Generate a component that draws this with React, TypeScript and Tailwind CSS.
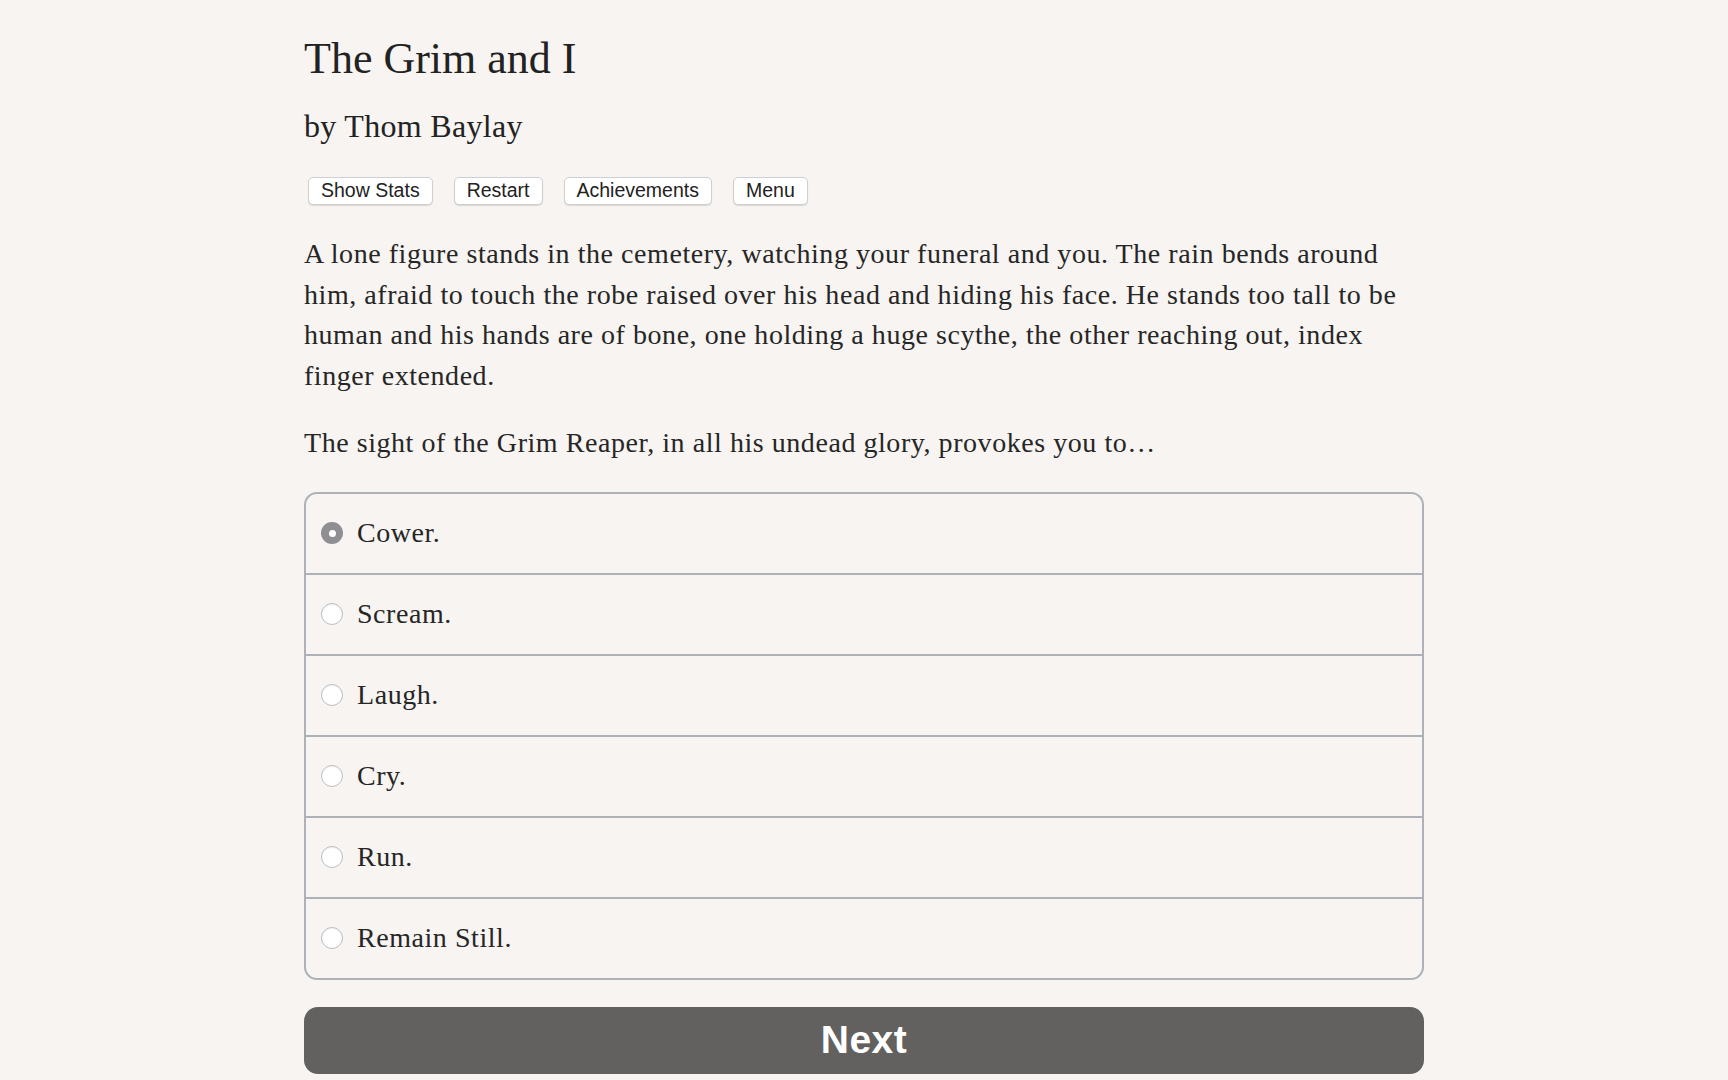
import React from 'react'

const choices = ['Cower.', 'Scream.', 'Laugh.', 'Cry.', 'Run.', 'Remain Still.']

const serif = "font-['Liberation_Serif',serif]"

const TopButton = ({ label }: { label: string }) => (
  <button className="h-[28px] px-[12px] bg-white border border-[#cfcfcf] rounded-[5px] shadow-[0_1px_1px_rgba(0,0,0,0.12)] text-[19.5px] leading-none text-[#222] font-['Liberation_Sans',sans-serif]">
    {label}
  </button>
)

const Radio = ({ checked }: { checked: boolean }) =>
  checked ? (
    <span className="flex items-center justify-center w-[22px] h-[22px] rounded-full bg-[#8e8e93] shrink-0">
      <span className="w-[7px] h-[7px] rounded-full bg-white" />
    </span>
  ) : (
    <span className="w-[22px] h-[22px] rounded-full bg-white border border-[#bdbdbd] shadow-[inset_0_1px_1px_rgba(0,0,0,0.05)] shrink-0" />
  )

export default function App() {
  return (
    <div className={`min-h-screen bg-[#f7f4f1] text-[#262626] ${serif}`}>
      <div className="w-[1120px] mx-auto pt-[33px] pb-[40px]">
        <h1 className="text-[44px] leading-[1.2] text-[#222]">The Grim and I</h1>
        <h2 className="mt-[21px] text-[32px] leading-[1.2] text-[#222] tracking-[0.3px]">by Thom Baylay</h2>

        <div className="mt-[32px] flex gap-[21px] pl-[4px]">
          <TopButton label="Show Stats" />
          <TopButton label="Restart" />
          <TopButton label="Achievements" />
          <TopButton label="Menu" />
        </div>

        <p className="mt-[29px] text-[28px] leading-[40.5px] tracking-[0.55px]">
          A lone figure stands in the cemetery, watching your funeral and you. The rain bends around
          him, afraid to touch the robe raised over his head and hiding his face. He stands too tall to
          be human and his hands are of bone, one holding a huge scythe, the other reaching out, index
          finger extended.
        </p>
        <p className="mt-[27px] text-[28px] leading-[40.5px] tracking-[0.55px]">
          The sight of the Grim Reaper, in all his undead glory, provokes you to…
        </p>

        <div className="mt-[28px] border-2 border-[#aeb1b5] rounded-[13px] overflow-hidden">
          {choices.map((c, i) => (
            <label
              key={c}
              className={`flex items-center pl-[15px] gap-[14px] ${
                i === 0 ? 'h-[79px]' : 'h-[81px] border-t-2 border-[#aeb1b5]'
              } ${i === choices.length - 1 ? 'h-[79px]' : ''}`}
            >
              <Radio checked={i === 0} />
              <span className="text-[28px] leading-none tracking-[0.55px]">{c}</span>
            </label>
          ))}
        </div>

        <button className="mt-[27px] w-full h-[67px] rounded-[14px] bg-[#626160] text-white text-[39px] tracking-[0.5px] font-bold font-['Liberation_Sans',sans-serif] flex items-center justify-center">
          Next
        </button>
      </div>
    </div>
  )
}
